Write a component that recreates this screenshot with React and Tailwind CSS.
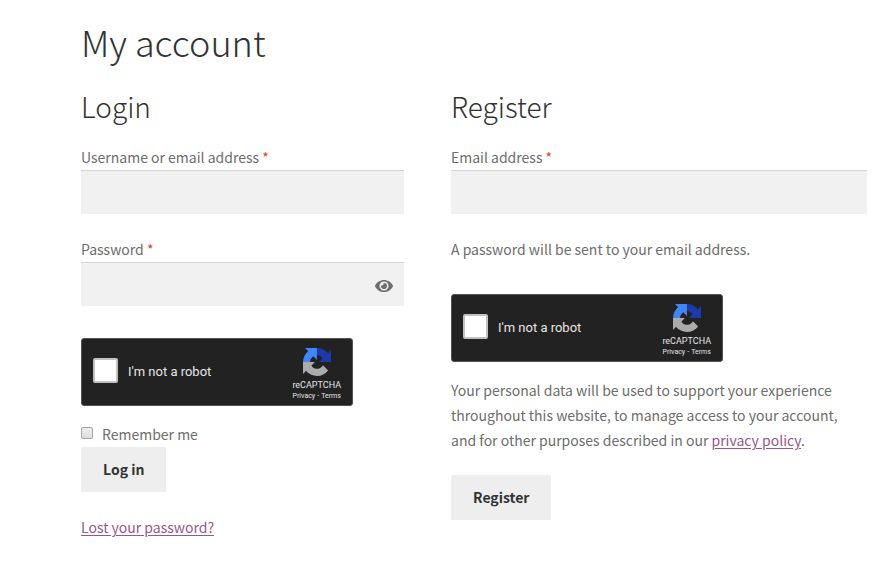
import { FaEye } from "react-icons/fa";

const headingClass = "text-[28px] leading-9 font-light text-[#333333]";
const inputClass =
  "block h-11 w-full border-0 border-t border-[#d5d5d5] bg-[#f1f1f1] px-3 text-[#43454b] outline-none";
const buttonClass =
  "h-[45px] bg-[#eeeeee] px-[22px] font-bold text-[#333333]";
const linkClass = "text-[#96588a] underline underline-offset-2";

function Required() {
  return <span className="text-[#e2401c]">*</span>;
}

function RecaptchaLogo() {
  return (
    <svg viewBox="0 0 64 64" className="h-7 w-7" aria-hidden="true">
      <path
        fill="#1c3aa9"
        d="M64 31.955l-.033-1.37V4.687l-7.16 7.16C50.948 4.674 42.033.093 32.05.093c-10.4 0-19.622 4.96-25.458 12.64l11.736 11.86a15.55 15.55 0 0 1 4.754-5.334c2.05-1.6 4.952-2.906 8.968-2.906.485 0 .86.057 1.135.163 4.976.393 9.288 3.14 11.828 7.124l-8.307 8.307L64 31.953"
      />
      <path
        fill="#4285f4"
        d="M31.862.094l-1.37.033H4.594l7.16 7.16C4.58 13.147 0 22.06 0 32.046c0 10.4 4.96 19.622 12.64 25.458L24.5 45.768a15.55 15.55 0 0 1-5.334-4.754c-1.6-2.05-2.906-4.952-2.906-8.968 0-.485.057-.86.163-1.135.393-4.976 3.14-9.288 7.124-11.828l8.307 8.307L31.86.095"
      />
      <path
        fill="#ababab"
        d="M.001 32.045l.033 1.37v25.898l7.16-7.16c5.86 7.173 14.774 11.754 24.76 11.754 10.4 0 19.622-4.96 25.458-12.64l-11.736-11.86a15.55 15.55 0 0 1-4.754 5.334c-2.05 1.6-4.952 2.906-8.968 2.906-.485 0-.86-.057-1.135-.163-4.976-.393-9.288-3.14-11.828-7.124l8.307-8.307c-10.522.04-22.4.066-27.295-.005"
      />
    </svg>
  );
}

function Recaptcha({ id }) {
  return (
    <div className="flex h-[68px] w-[272px] items-center rounded-[3px] border border-[#525252] bg-[#222222] px-[11px] pb-[3px] font-['Roboto',sans-serif] text-[#e6e6e6]">
      <input
        id={id}
        type="checkbox"
        className="h-[25px] w-[25px] appearance-none rounded-[2px] border-2 border-[#c1c1c1] bg-white"
      />
      <label htmlFor={id} className="ml-[10px] pt-[2px] text-[13px] leading-4">
        I'm not a robot
      </label>
      <div className="ml-auto flex flex-col items-center pt-[7px]">
        <RecaptchaLogo />
        <span className="mt-[3px] text-[9px] leading-3">reCAPTCHA</span>
        <span className="flex gap-[2px] text-[7px] leading-[10px]">
          <a href="#privacy">Privacy</a>
          <span>-</span>
          <a href="#terms">Terms</a>
        </span>
      </div>
    </div>
  );
}

export default function App() {
  return (
    <main className="pt-[18px] pr-[25px] pb-10 pl-[81px] font-['Noto_Sans_CJK_SC',sans-serif] text-[14px] leading-[25px] text-[#6d6d6d]">
      <h1 className="text-[36px] leading-[46px] font-light text-[#333333]">
        My account
      </h1>
      <div className="mt-6 grid grid-cols-[323fr_416fr] gap-[47px]">
        <section>
          <h2 className={headingClass}>Login</h2>
          <form className="mt-[21px]">
            <label htmlFor="username" className="block">
              Username or email address <Required />
            </label>
            <input id="username" type="text" className={inputClass} />

            <label htmlFor="password" className="mt-[23px] block">
              Password <Required />
            </label>
            <div className="relative">
              <input id="password" type="password" className={inputClass} />
              <button
                type="button"
                aria-label="Show password"
                className="absolute inset-y-0 right-[11px] flex items-center pt-1"
              >
                <FaEye className="h-[18px] w-[18px]" />
              </button>
            </div>

            <div className="mt-8">
              <Recaptcha id="robot-login" />
            </div>

            <div className="mt-4 flex items-center">
              <input
                id="remember"
                type="checkbox"
                className="mb-[3px] h-3 w-3 appearance-none rounded-[2px] border border-[#a5a5a5] bg-linear-to-b from-[#eeeeee] to-[#dcdcdc]"
              />
              <label htmlFor="remember" className="ml-[9px]">
                Remember me
              </label>
            </div>
            <button type="submit" className={buttonClass}>
              Log in
            </button>
            <p className="mt-[23px]">
              <a href="#lost" className={linkClass}>
                Lost your password?
              </a>
            </p>
          </form>
        </section>

        <section>
          <h2 className={headingClass}>Register</h2>
          <form className="mt-[21px]">
            <label htmlFor="email" className="block">
              Email address <Required />
            </label>
            <input id="email" type="email" className={inputClass} />
            <p className="mt-[23px]">
              A password will be sent to your email address.
            </p>
            <div className="mt-8">
              <Recaptcha id="robot-register" />
            </div>
            <p className="mt-4 pr-4">
              Your personal data will be used to support your experience
              throughout this website, to manage access to your account, and for
              other purposes described in our{" "}
              <a href="#policy" className={linkClass}>
                privacy policy
              </a>
              .
            </p>
            <button type="submit" className={`mt-[22px] ${buttonClass}`}>
              Register
            </button>
          </form>
        </section>
      </div>
    </main>
  );
}
